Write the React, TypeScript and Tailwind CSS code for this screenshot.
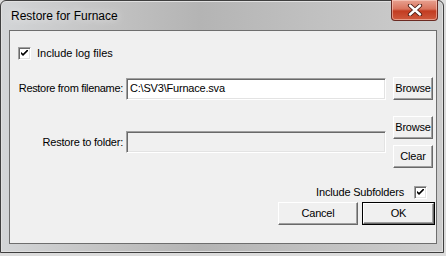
import React from "react";

const ui = { fontFamily: '"Liberation Sans", Arial, sans-serif' };

function Btn({ children, def = false, className = "" }: { children: React.ReactNode; def?: boolean; className?: string }) {
  const inner = (
    <div className="h-full w-full flex items-center justify-center border-t border-l border-t-white border-l-white border-b border-r border-b-[#696969] border-r-[#696969] bg-[#f0f0f0] shadow-[inset_-1px_-1px_0_#a0a0a0] text-[11px] tracking-[-0.2px] text-black">
      {children}
    </div>
  );
  if (def) return <div className={`border border-black ${className}`}>{inner}</div>;
  return <div className={className}>{inner}</div>;
}

function Check() {
  return (
    <div className="w-[13px] h-[13px] border-t border-l border-t-[#a0a0a0] border-l-[#a0a0a0] border-b border-r border-b-white border-r-white shadow-[inset_1px_1px_0_#696969,inset_-1px_-1px_0_#e3e3e3] bg-white flex items-center justify-center">
      <svg width="7" height="7" viewBox="0 0 7 7" className="block">
        <path d="M0 2 L0 4 L2 6 L7 1 L7 -1 L2 4 Z" fill="#000" />
        <path d="M0 2.5 L2 4.5 L6.5 0" stroke="#000" strokeWidth="1" fill="none" />
      </svg>
    </div>
  );
}

function Field({ value, disabled = false }: { value?: string; disabled?: boolean }) {
  return (
    <div
      className={`w-[260px] h-[22px] flex items-center pl-[3px] border-t border-l border-t-[#a0a0a0] border-l-[#a0a0a0] border-b border-r border-b-white border-r-white shadow-[inset_1px_1px_0_#696969,inset_-1px_-1px_0_#e3e3e3] text-[11px] tracking-[-0.2px] text-black ${disabled ? "bg-[#f0f0f0]" : "bg-white"}`}
    >
      {value}
    </div>
  );
}

export default function App() {
  return (
    <div className="w-[446px] h-[256px] bg-[#dcdcdc]" style={ui}>
      <div className="w-[444px] h-[253px] rounded-t-[6px] border border-[#3f3f3f] bg-[#c4c4c4] flex flex-col shadow-[inset_0_0_0_1px_#e0e0e0] bg-[linear-gradient(90deg,#d3d5d7_0%,#c2c2c2_25%,#b4b4b4_45%,#c0c0c0_70%,#cdcdcd_100%)]">
        {/* title bar */}
        <div className="h-[29px] flex items-start justify-between">
          <div
            className="pl-[10px] pt-[8px] text-[12px] text-black leading-[14px]"
            style={{ fontFamily: '"Liberation Sans", "Noto Sans", sans-serif', textShadow: "0 0 8px rgba(255,255,255,0.9)" }}
          >
            Restore for Furnace
          </div>
          <div className="-mt-px mr-[5px] w-[47px] h-[21px] rounded-b-[4px] border border-[#6b2a22] border-t-0 bg-[linear-gradient(180deg,#e8a190_0%,#d9745e_45%,#c23c21_55%,#cf5a3e_100%)] shadow-[inset_0_0_0_1px_rgba(255,220,210,0.5)] flex items-center justify-center">
            <svg width="16" height="12" viewBox="0 0 16 12">
              <path d="M3 1.5 L13 10.5 M13 1.5 L3 10.5" stroke="#4a1c14" strokeWidth="4.2" strokeLinecap="round" />
              <path d="M3 1.5 L13 10.5 M13 1.5 L3 10.5" stroke="#ffffff" strokeWidth="2.4" strokeLinecap="round" />
            </svg>
          </div>
        </div>
        {/* client */}
        <div className="ml-[8px] mr-[6px] h-[214px] border border-[#6e6e6e] bg-[#f0f0f0] flex flex-col">
          <div className="mt-[16px] ml-[8px] flex items-center gap-[6px] h-[13px]">
            <Check />
            <span className="text-[11px] text-black leading-none">Include log files</span>
          </div>
          <div className="mt-[17px] flex items-center h-[23px]">
            <div className="w-[113px] text-right text-[11px] tracking-[-0.32px] text-black">Restore from filename:</div>
            <div className="ml-[3px]"><Field value="C:\SV3\Furnace.sva" /></div>
            <Btn className="ml-[7px] w-[40px] h-[23px]">Browse</Btn>
          </div>
          <div className="mt-[16px] flex items-center">
            <div className="w-[113px] text-right text-[11px] tracking-[-0.22px] text-black">Restore to folder:</div>
            <div className="ml-[3px]"><Field disabled /></div>
            <div className="ml-[7px] flex flex-col gap-[6px]">
              <Btn className="w-[40px] h-[23px]">Browse</Btn>
              <Btn className="w-[40px] h-[23px]">Clear</Btn>
            </div>
          </div>
          <div className="mt-[18px] flex items-center justify-end pr-[9px] h-[13px] gap-[10px]">
            <span className="text-[11px] tracking-[-0.18px] text-black leading-none">Include Subfolders</span>
            <Check />
          </div>
          <div className="mt-[3px] flex justify-end pr-[1px] gap-[4px]">
            <Btn className="w-[80px] h-[23px]">Cancel</Btn>
            <Btn def className="w-[73px] h-[23px]">OK</Btn>
          </div>
        </div>
      </div>
    </div>
  );
}
